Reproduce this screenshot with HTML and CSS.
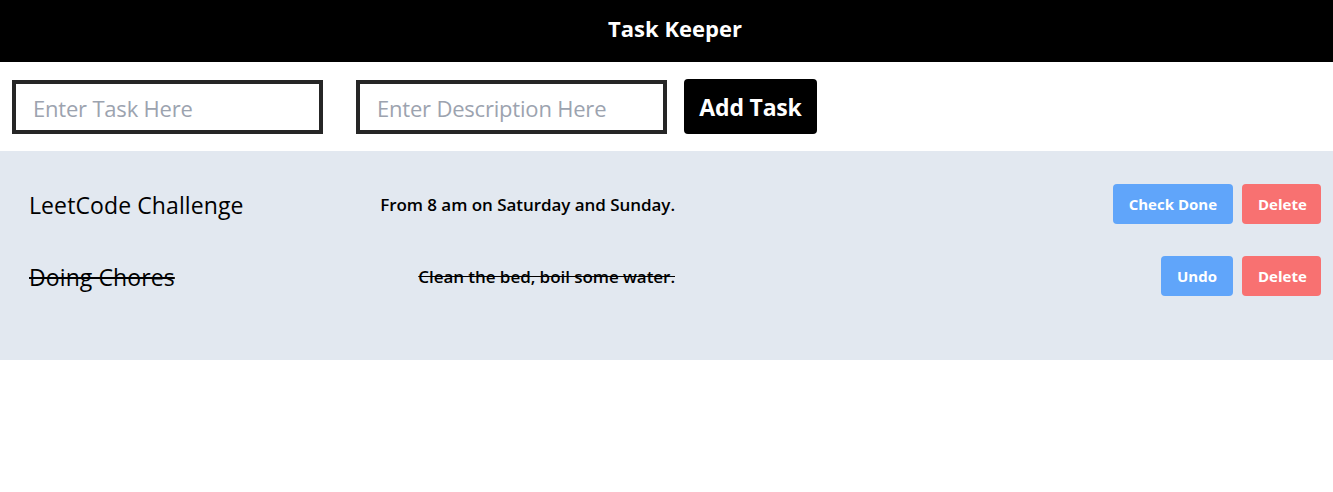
FILE: index.html
```html
<!DOCTYPE html>
<html>
<head>
<meta charset="utf-8">
<link rel="stylesheet" href="styles.css">
</head>
<body>
<header class="topbar"><h1 class="brand">Task Keeper</h1></header>
<form class="task-form">
  <input class="field" type="text" placeholder="Enter Task Here">
  <input class="field field-desc" type="text" placeholder="Enter Description Here">
  <button class="add-btn" type="button">Add Task</button>
</form>
<section class="task-list">
  <div class="task-row">
    <div class="task-text">
      <span class="task-title">LeetCode Challenge</span>
      <span class="task-desc">From 8 am on Saturday and Sunday.</span>
    </div>
    <div class="task-actions">
      <button class="btn btn-blue" type="button">Check Done</button>
      <button class="btn btn-red" type="button">Delete</button>
    </div>
  </div>
  <div class="task-row done">
    <div class="task-text">
      <span class="task-title">Doing Chores</span>
      <span class="task-desc">Clean the bed, boil some water.</span>
    </div>
    <div class="task-actions">
      <button class="btn btn-blue" type="button">Undo</button>
      <button class="btn btn-red" type="button">Delete</button>
    </div>
  </div>
</section>
</body>
</html>
```
FILE: styles.css
```css
* { box-sizing: border-box; }
body {
  margin: 0;
  font-family: "Open Sans", "Noto Sans", sans-serif;
  color: #000;
  background: #fff;
}
.topbar {
  height: 62px;
  background: #000;
  display: flex;
  align-items: center;
  justify-content: center;
  padding: 0 0 6px 17px;
}
.brand {
  margin: 0;
  color: #fff;
  font-size: 22px;
  font-weight: 700;
  letter-spacing: 0;
}
.task-form {
  display: flex;
  align-items: center;
  padding: 17px 12px;
  margin: 0;
}
.field {
  width: 311px;
  height: 54px;
  border: 4px solid #262626;
  padding: 2px 17px 0;
  font-family: inherit;
  font-size: 22px;
  color: #000;
  outline: none;
  margin-right: 33px;
}
.field::placeholder { color: #9ca3af; letter-spacing: -0.2px; }
.field-desc { margin-right: 17px; }
.add-btn {
  width: 133px;
  height: 55px;
  background: #000;
  color: #fff;
  border: none;
  border-radius: 4px;
  font-family: inherit;
  font-size: 23px;
  font-weight: 700;
  letter-spacing: -0.2px;
}
.task-list {
  background: #e2e8f0;
  padding: 33px 12px 64px 29px;
  display: flex;
  flex-direction: column;
  gap: 32px;
}
.task-row {
  display: flex;
  align-items: center;
  height: 40px;
}
.task-text {
  width: 646px;
  display: flex;
  justify-content: space-between;
  align-items: center;
}
.task-title {
  font-size: 23px;
  letter-spacing: 0.1px;
  padding-top: 2px;
}
.task-desc {
  font-size: 17px;
  font-weight: 600;
  letter-spacing: -0.05px;
}
.done .task-title, .done .task-desc { text-decoration: line-through; }
.task-actions {
  margin-left: auto;
  display: flex;
  gap: 9px;
}
.btn {
  height: 40px;
  border: none;
  border-radius: 4px;
  color: #fff;
  font-family: inherit;
  font-size: 15px;
  font-weight: 700;
  padding: 0 16px;
  letter-spacing: 0;
}
.btn-blue { background: #60a5fa; }
.btn-red { background: #f87171; width: 79px; }
```
